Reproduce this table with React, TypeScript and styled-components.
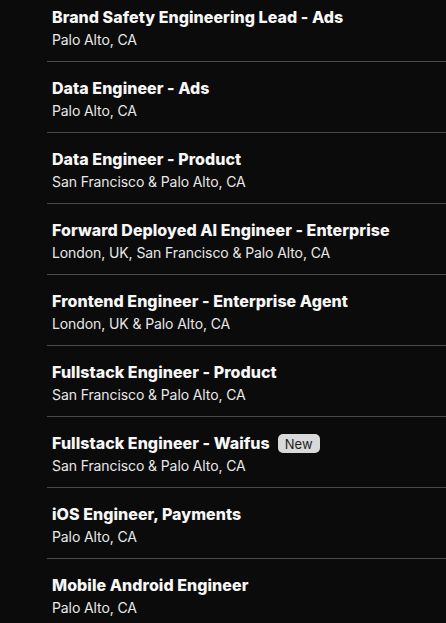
import React from "react";
import styled, { createGlobalStyle } from "styled-components";

const Global = createGlobalStyle`
  html, body { margin: 0; padding: 0; background: #0b0b0b; }
  body { font-family: Inter, "Liberation Sans", sans-serif; color: #f5f5f5; overflow: hidden; }
`;

const List = styled.ul`
  list-style: none;
  margin: -9px 0 0 47px;
  padding: 0;
`;

const Row = styled.li`
  display: flex;
  flex-direction: column;
  gap: 3px;
  padding: 16px 0 0 5px;
  border-bottom: 1px solid #4a4a4a;
  height: 71px;
  box-sizing: border-box;
`;

const TitleLine = styled.div`
  display: flex;
  align-items: flex-start;
  gap: 8px;
`;

const Title = styled.span`
  font-size: 16px;
  font-weight: 800;
  line-height: 20px;
  color: #f7f7f7;
  letter-spacing: 0.05px;
`;

const Badge = styled.span`
  display: inline-flex;
  align-items: center;
  justify-content: center;
  box-sizing: border-box;
  height: 19px;
  margin-top: 1px;
  padding: 1px 7px 0;
  border-radius: 5px;
  background: #d9d9d9;
  color: #1e1e1e;
  font-size: 13px;
  line-height: 1;
`;

const Location = styled.span`
  font-size: 14px;
  line-height: 20px;
  color: #e8e8e8;
  letter-spacing: -0.1px;
`;

const jobs: { title: string; location: string; isNew?: boolean }[] = [
  { title: "Brand Safety Engineering Lead - Ads", location: "Palo Alto, CA" },
  { title: "Data Engineer - Ads", location: "Palo Alto, CA" },
  { title: "Data Engineer - Product", location: "San Francisco & Palo Alto, CA" },
  { title: "Forward Deployed AI Engineer - Enterprise", location: "London, UK, San Francisco & Palo Alto, CA" },
  { title: "Frontend Engineer - Enterprise Agent", location: "London, UK & Palo Alto, CA" },
  { title: "Fullstack Engineer - Product", location: "San Francisco & Palo Alto, CA" },
  { title: "Fullstack Engineer - Waifus", location: "San Francisco & Palo Alto, CA", isNew: true },
  { title: "iOS Engineer, Payments", location: "Palo Alto, CA" },
  { title: "Mobile Android Engineer", location: "Palo Alto, CA" },
];

export default function App() {
  return (
    <>
      <Global />
      <List>
        {jobs.map((j) => (
          <Row key={j.title}>
            <TitleLine>
              <Title>{j.title}</Title>
              {j.isNew && <Badge>New</Badge>}
            </TitleLine>
            <Location>{j.location}</Location>
          </Row>
        ))}
      </List>
    </>
  );
}
